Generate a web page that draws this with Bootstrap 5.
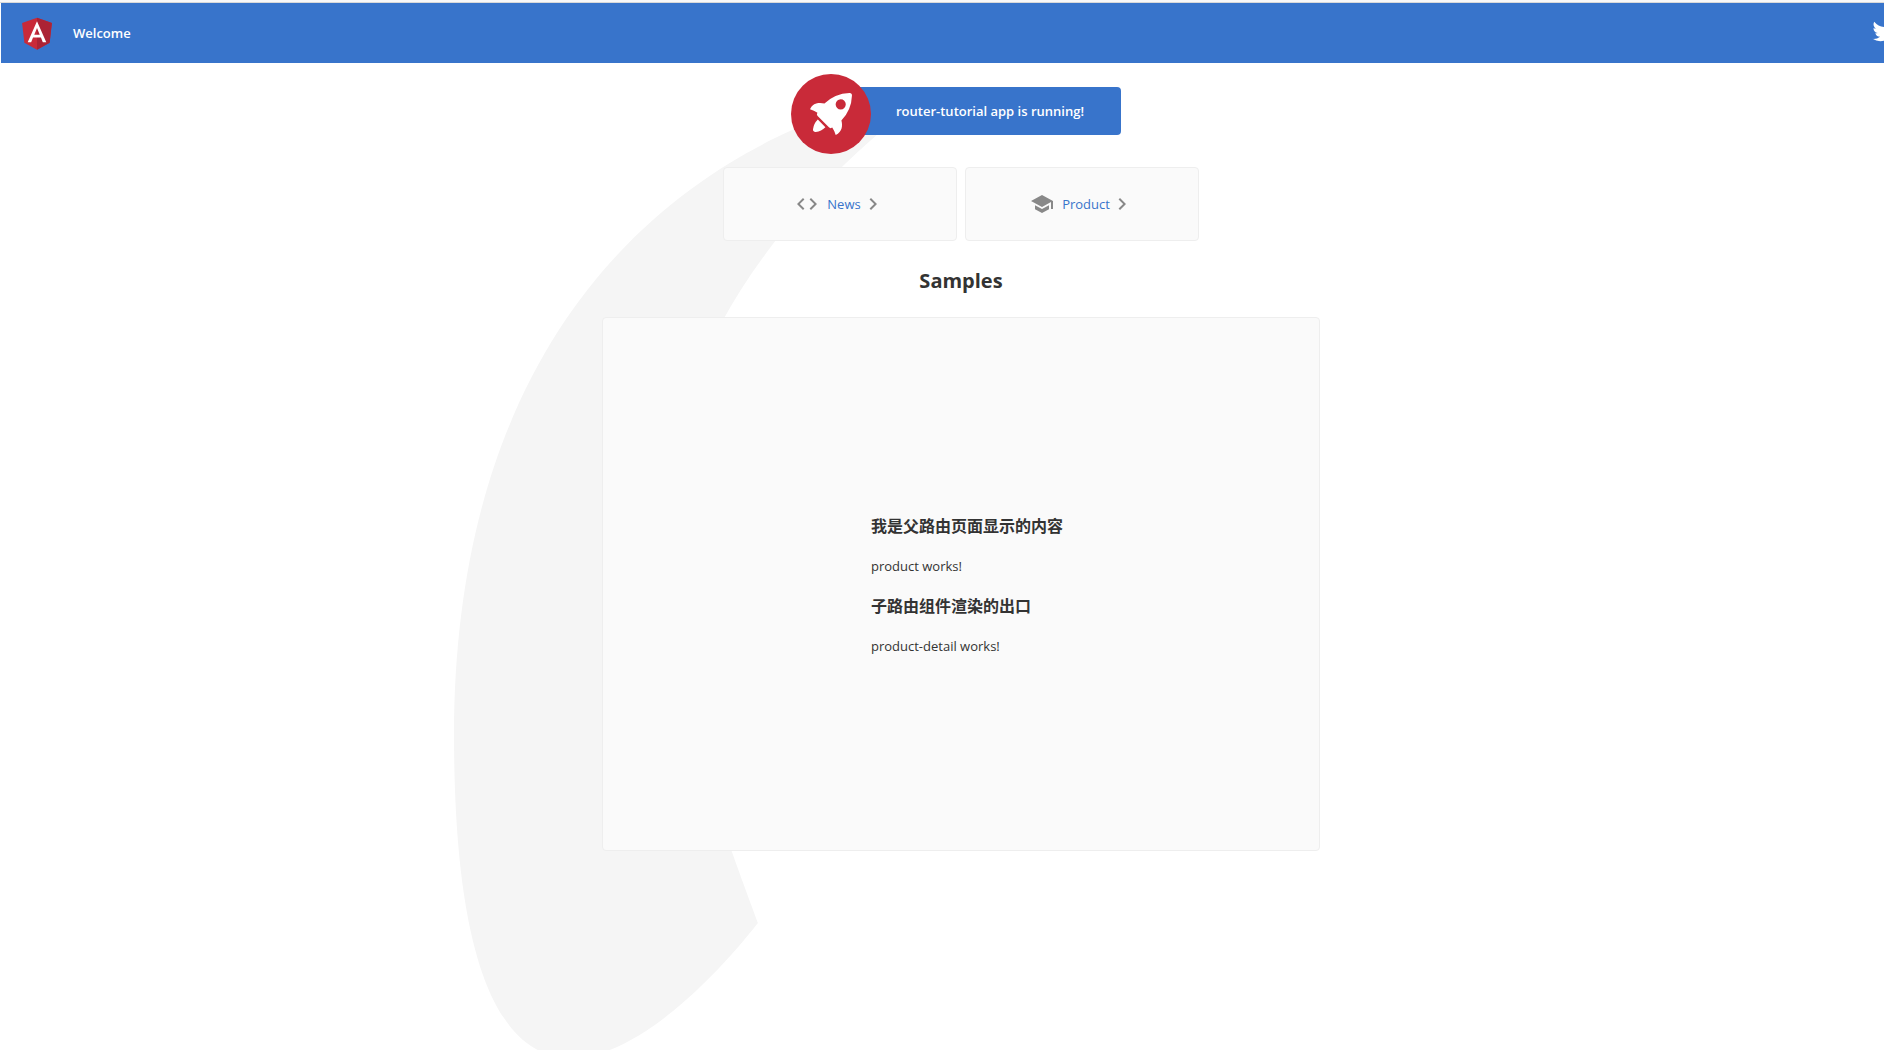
<!DOCTYPE html>
<html lang="zh-CN">
<head>
<meta charset="utf-8">
<meta name="viewport" content="width=device-width, initial-scale=1">
<title>router-tutorial</title>
<link href="https://cdn.jsdelivr.net/npm/bootstrap@5.3.0/dist/css/bootstrap.min.css" rel="stylesheet">
<style>
  :root { --brand: #3874cb; --accent: #c92a39; --line: #eeeeee; --panel: #fafafa; --icon: #888888; }
  html { overflow: hidden; }
  body { font-family: "Open Sans", "Noto Sans CJK SC", sans-serif; font-size: 13px; line-height: 24px; color: #333; background: #fff; overflow: hidden; min-height: 100vh; }
  .top-edge { height: 3px; background: #f8f8f8; border-bottom: 1px solid #d9d9d9; }
  /* the shell is wider than the window, so its right edge is cut off */
  .app-shell { margin: 0 -37px 0 1px; }
  .toolbar { height: 60px; background: var(--brand); color: #fff; font-weight: 600; }
  .welcome-content { padding-top: 24px; }
  .running-card { width: 320px; height: 48px; border-radius: 4px; background: var(--brand); color: #fff; font-weight: 600; padding-left: 95px; }
  .rocket { position: absolute; top: -13px; left: -10px; }
  .rocket-smoke { position: absolute; top: 10px; right: 209px; height: 961px; width: auto; z-index: -1; }
  .panel-box { border: 1px solid var(--line); border-radius: 4px; background: var(--panel); position: relative; }
  .nav-box { width: 234px; height: 74px; color: var(--brand); text-decoration: none; }
  .nav-box path { fill: var(--icon); }
  .samples-title { font-size: 20px; line-height: 28px; font-weight: 700; margin: 26px 0 22px; }
  .outlet-box { width: 718px; height: 534px; padding-top: 4px; }
  .outlet-text { width: 180px; white-space: nowrap; }
  .outlet-text h3 { font-size: 16px; line-height: 24px; font-weight: 700; margin: 0; }
  .outlet-text p { margin: 0; }
</style>
</head>
<body>
<div class="top-edge"></div>
<div class="app-shell">
  <header class="toolbar d-flex align-items-center px-3" role="banner">
    <svg width="40" height="40" viewBox="0 0 250 250" role="img" aria-label="Angular Logo" class="me-3">
      <path fill="#c92a39" d="M125 30 31.9 63.2l14.2 123.1L125 230l78.9-43.7 14.2-123.1z"/>
      <path fill="#ac2335" d="M125 30v22.2-.1V230l78.9-43.7 14.2-123.1z"/>
      <path fill="#fff" d="M125 52.1 66.8 182.6h21.7l11.7-29.2h49.4l11.7 29.2H183zm17 83.3h-34l17-40.9z"/>
    </svg>
    <span>Welcome</span>
    <a href="#" class="ms-auto d-flex pb-1" aria-label="Twitter">
      <svg width="40" height="40" viewBox="0 0 400 400"><path fill="#fff" d="M153.62,301.59c94.34,0,145.94-78.16,145.94-145.94,0-2.22,0-4.43-.15-6.63A104.36,104.36,0,0,0,325,122.47a102.38,102.38,0,0,1-29.46,8.07,51.47,51.47,0,0,0,22.55-28.37,102.79,102.79,0,0,1-32.57,12.45,51.34,51.34,0,0,0-87.41,46.78A145.62,145.62,0,0,1,92.4,107.81a51.33,51.33,0,0,0,15.88,68.47A50.91,50.91,0,0,1,85,169.86c0,.21,0,.43,0,.65a51.31,51.31,0,0,0,41.15,50.28,51.21,51.21,0,0,1-23.16.88,51.35,51.35,0,0,0,47.92,35.62,102.92,102.92,0,0,1-63.7,22A104.41,104.41,0,0,1,75,278.55a145.21,145.21,0,0,0,78.62,23"/></svg>
    </a>
  </header>

  <main class="welcome-content d-flex flex-column align-items-center">
    <div class="running-card position-relative d-flex align-items-center">
      <svg class="rocket" width="80" height="80" viewBox="0 0 101.678 101.678" aria-hidden="true">
        <circle cx="50.839" cy="50.839" r="50.839" fill="#c92a39"/>
        <g transform="translate(24.185 24.185)" fill="#fff">
          <path d="M3.4,42.615a3.084,3.084,0,0,0,3.553,3.553,21.419,21.419,0,0,0,12.215-6.107L9.511,30.4A21.419,21.419,0,0,0,3.4,42.615Z" transform="translate(0.371 3.363)"/>
          <path d="M53.3,3.221A3.09,3.09,0,0,0,50.081,0,48.227,48.227,0,0,0,18.322,13.437c-6-1.666-14.991-1.221-18.322,7.218A33.892,33.892,0,0,1,9.439,25.1l-.333.666a3.013,3.013,0,0,0,.555,3.553L23.985,43.641a2.9,2.9,0,0,0,3.553.555l.666-.333A33.892,33.892,0,0,1,32.647,53.3c8.55-3.664,8.884-12.326,7.218-18.322A48.227,48.227,0,0,0,53.3,3.221ZM34.424,9.772a6.439,6.439,0,1,1,9.106,9.106,6.368,6.368,0,0,1-9.106,0A6.467,6.467,0,0,1,34.424,9.772Z"/>
        </g>
      </svg>
      <span>router-tutorial app is running!</span>
      <svg class="rocket-smoke" viewBox="0 0 516.119 1083.632" aria-hidden="true">
        <path fill="#f5f5f5" transform="translate(-147.025 -140.939)" d="M644.6,141S143.02,215.537,147.049,870.207s342.774,201.755,342.774,201.755S404.659,847.213,388.815,762.2c-27.116-145.51-11.551-384.124,271.9-609.1C671.15,139.365,644.6,141,644.6,141Z"/>
      </svg>
    </div>

    <nav class="d-flex gap-2 mt-3 pt-3">
      <a class="panel-box nav-box d-flex align-items-center justify-content-center" href="#news">
        <svg class="me-2" width="24" height="24" viewBox="0 0 24 24"><path d="M9.4 16.6L4.8 12l4.6-4.6L8 6l-6 6 6 6 1.4-1.4zm5.2 0l4.6-4.6-4.6-4.6L16 6l6 6-6 6-1.4-1.4z"/></svg>
        <span>News</span>
        <svg width="24" height="24" viewBox="0 0 24 24"><path d="M10 6L8.59 7.41 13.17 12l-4.58 4.59L10 18l6-6z"/></svg>
      </a>
      <a class="panel-box nav-box d-flex align-items-center justify-content-center" href="#product">
        <svg class="me-2" width="24" height="24" viewBox="0 0 24 24"><path d="M5 13.18v4L12 21l7-3.82v-4L12 17l-7-3.82zM12 3L1 9l11 6 9-4.91V17h2V9L12 3z"/></svg>
        <span>Product</span>
        <svg width="24" height="24" viewBox="0 0 24 24"><path d="M10 6L8.59 7.41 13.17 12l-4.58 4.59L10 18l6-6z"/></svg>
      </a>
    </nav>

    <h2 class="samples-title">Samples</h2>

    <section class="panel-box outlet-box d-flex align-items-center justify-content-center">
      <div class="outlet-text d-flex flex-column gap-3">
        <h3>我是父路由页面显示的内容</h3>
        <p>product works!</p>
        <h3>子路由组件渲染的出口</h3>
        <p>product-detail works!</p>
      </div>
    </section>
  </main>
</div>
<script src="https://cdn.jsdelivr.net/npm/bootstrap@5.3.0/dist/js/bootstrap.bundle.min.js"></script>
</body>
</html>
